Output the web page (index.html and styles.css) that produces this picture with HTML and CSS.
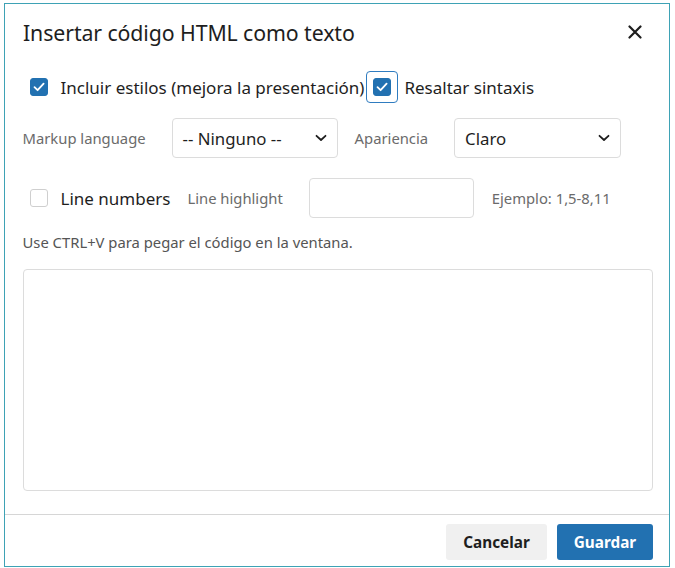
FILE: index.html
```html
<!DOCTYPE html>
<html lang="es">
<head>
<meta charset="utf-8">
<title>Insertar código HTML como texto</title>
<link rel="stylesheet" href="styles.css">
</head>
<body>
<div class="dialog">
  <div class="header">
    <h1 class="title">Insertar código HTML como texto</h1>
    <button class="close" aria-label="Cerrar">
      <svg width="14" height="14" viewBox="0 0 14 14"><path d="M1.5 1.5 L12.5 12.5 M12.5 1.5 L1.5 12.5" stroke="#1e1e1e" stroke-width="2.2" stroke-linecap="round"/></svg>
    </button>
  </div>
  <div class="body">
    <div class="row row-checks">
      <label class="check">
        <span class="cb-wrap"><span class="cb checked"><svg width="14" height="14" viewBox="0 0 14 14"><path d="M2.5 7.2 L5.6 10.2 L11.6 3.6" fill="none" stroke="#fff" stroke-width="1.8" stroke-linecap="round" stroke-linejoin="round"/></svg></span></span>
        <span class="check-label">Incluir estilos (mejora la presentación)</span>
      </label>
      <label class="check">
        <span class="cb-wrap focused"><span class="cb checked"><svg width="14" height="14" viewBox="0 0 14 14"><path d="M2.5 7.2 L5.6 10.2 L11.6 3.6" fill="none" stroke="#fff" stroke-width="1.8" stroke-linecap="round" stroke-linejoin="round"/></svg></span></span>
        <span class="check-label">Resaltar sintaxis</span>
      </label>
    </div>
    <div class="row row-selects">
      <span class="field-label">Markup language</span>
      <div class="select sel-markup">
        <span class="select-value">-- Ninguno --</span>
        <svg class="chev" width="12" height="8" viewBox="0 0 12 8"><path d="M1.5 1.8 L6 6 L10.5 1.8" fill="none" stroke="#1e1e1e" stroke-width="1.8" stroke-linecap="round" stroke-linejoin="round"/></svg>
      </div>
      <span class="field-label">Apariencia</span>
      <div class="select sel-theme">
        <span class="select-value">Claro</span>
        <svg class="chev" width="12" height="8" viewBox="0 0 12 8"><path d="M1.5 1.8 L6 6 L10.5 1.8" fill="none" stroke="#1e1e1e" stroke-width="1.8" stroke-linecap="round" stroke-linejoin="round"/></svg>
      </div>
    </div>
    <div class="row row-lines">
      <label class="check">
        <span class="cb-wrap"><span class="cb"></span></span>
        <span class="check-label">Line numbers</span>
      </label>
      <span class="field-label hl-label">Line highlight</span>
      <div class="text-input"></div>
      <span class="hint">Ejemplo: 1,5-8,11</span>
    </div>
    <p class="help">Use CTRL+V para pegar el código en la ventana.</p>
    <div class="code-area"></div>
  </div>
  <div class="footer">
    <button class="btn btn-cancel">Cancelar</button>
    <button class="btn btn-save">Guardar</button>
  </div>
</div>
</body>
</html>
```

FILE: styles.css
```css
* { box-sizing: border-box; }

html, body {
  margin: 0;
  padding: 0;
  background: #fff;
}

body {
  font-family: "Noto Sans", "Open Sans", sans-serif;
  color: #1e1e1e;
  padding: 3px 5px 1px 4px;
}

.dialog {
  width: 666px;
  height: 564px;
  border: 1.5px solid #3ea2b5;
  display: flex;
  flex-direction: column;
  background: #fff;
}

.header {
  height: 56px;
  padding: 0 27px 0 18px;
  display: flex;
  align-items: center;
  justify-content: space-between;
  flex: none;
}

.title {
  margin: 0;
  font-size: 21.3px;
  font-weight: 400;
  color: #1e1e1e;
  letter-spacing: -0.1px;
}

.close {
  border: 0;
  background: transparent;
  padding: 0;
  width: 14px;
  height: 14px;
  display: flex;
}

.body {
  flex: 1;
  padding: 0 16px 0 17.5px;
  display: flex;
  flex-direction: column;
}

.row {
  display: flex;
  align-items: center;
}

.row-checks {
  margin-top: 11px;
  height: 32px;
  gap: 2px;
}

.check {
  display: flex;
  align-items: center;
  gap: 6px;
}

.cb-wrap {
  width: 32px;
  height: 32px;
  display: flex;
  align-items: center;
  justify-content: center;
  border: 1px solid transparent;
  border-radius: 4px;
}

.cb-wrap.focused {
  border-color: #2f7cc0;
}

.cb {
  width: 18px;
  height: 18px;
  border-radius: 3px;
  border: 1px solid #cfcfcf;
  background: #fff;
  display: flex;
  align-items: center;
  justify-content: center;
}

.cb.checked {
  background: #2271b1;
  border-color: #2271b1;
}

.check-label {
  font-size: 17px;
  color: #1e1e1e;
  white-space: nowrap;
}

.row-selects {
  margin-top: 15px;
  height: 40px;
}

.field-label {
  font-size: 14.8px;
  color: #6b6b6b;
  margin-right: 26px;
  white-space: nowrap;
}

.select {
  height: 40px;
  border: 1px solid #dcdcdc;
  border-radius: 4px;
  display: flex;
  align-items: center;
  justify-content: space-between;
  padding: 0 10px 0 10px;
}

.sel-markup {
  width: 166px;
  margin-right: 17px;
}

.sel-theme {
  width: 167px;
}

.select-value {
  font-size: 16.8px;
  color: #1e1e1e;
}

.row-lines {
  margin-top: 20px;
  height: 40px;
}

.hl-label {
  margin-left: 17px;
}

.text-input {
  width: 165px;
  height: 40px;
  border: 1px solid #dcdcdc;
  border-radius: 4px;
  margin-right: 18px;
}

.hint {
  font-size: 14.8px;
  color: #6b6b6b;
}

.help {
  margin: 14px 0 0;
  font-size: 14.8px;
  line-height: 20px;
  color: #555;
}

.code-area {
  margin-top: 17px;
  height: 222px;
  border: 1px solid #dcdcdc;
  border-radius: 4px;
}

.footer {
  flex: none;
  height: 52px;
  border-top: 1px solid #d6d6d6;
  display: flex;
  justify-content: flex-end;
  align-items: flex-start;
  padding: 9px 16px 0 0;
  gap: 10px;
}

.btn {
  height: 36px;
  border: 0;
  border-radius: 3px;
  font-family: "Noto Sans", "Open Sans", sans-serif;
  font-size: 15.3px;
  font-weight: 700;
  padding: 0;
}

.btn-cancel {
  width: 101px;
  background: #f0f0f0;
  color: #1e1e1e;
}

.btn-save {
  width: 96px;
  background: #2271b1;
  color: #fff;
}
```
